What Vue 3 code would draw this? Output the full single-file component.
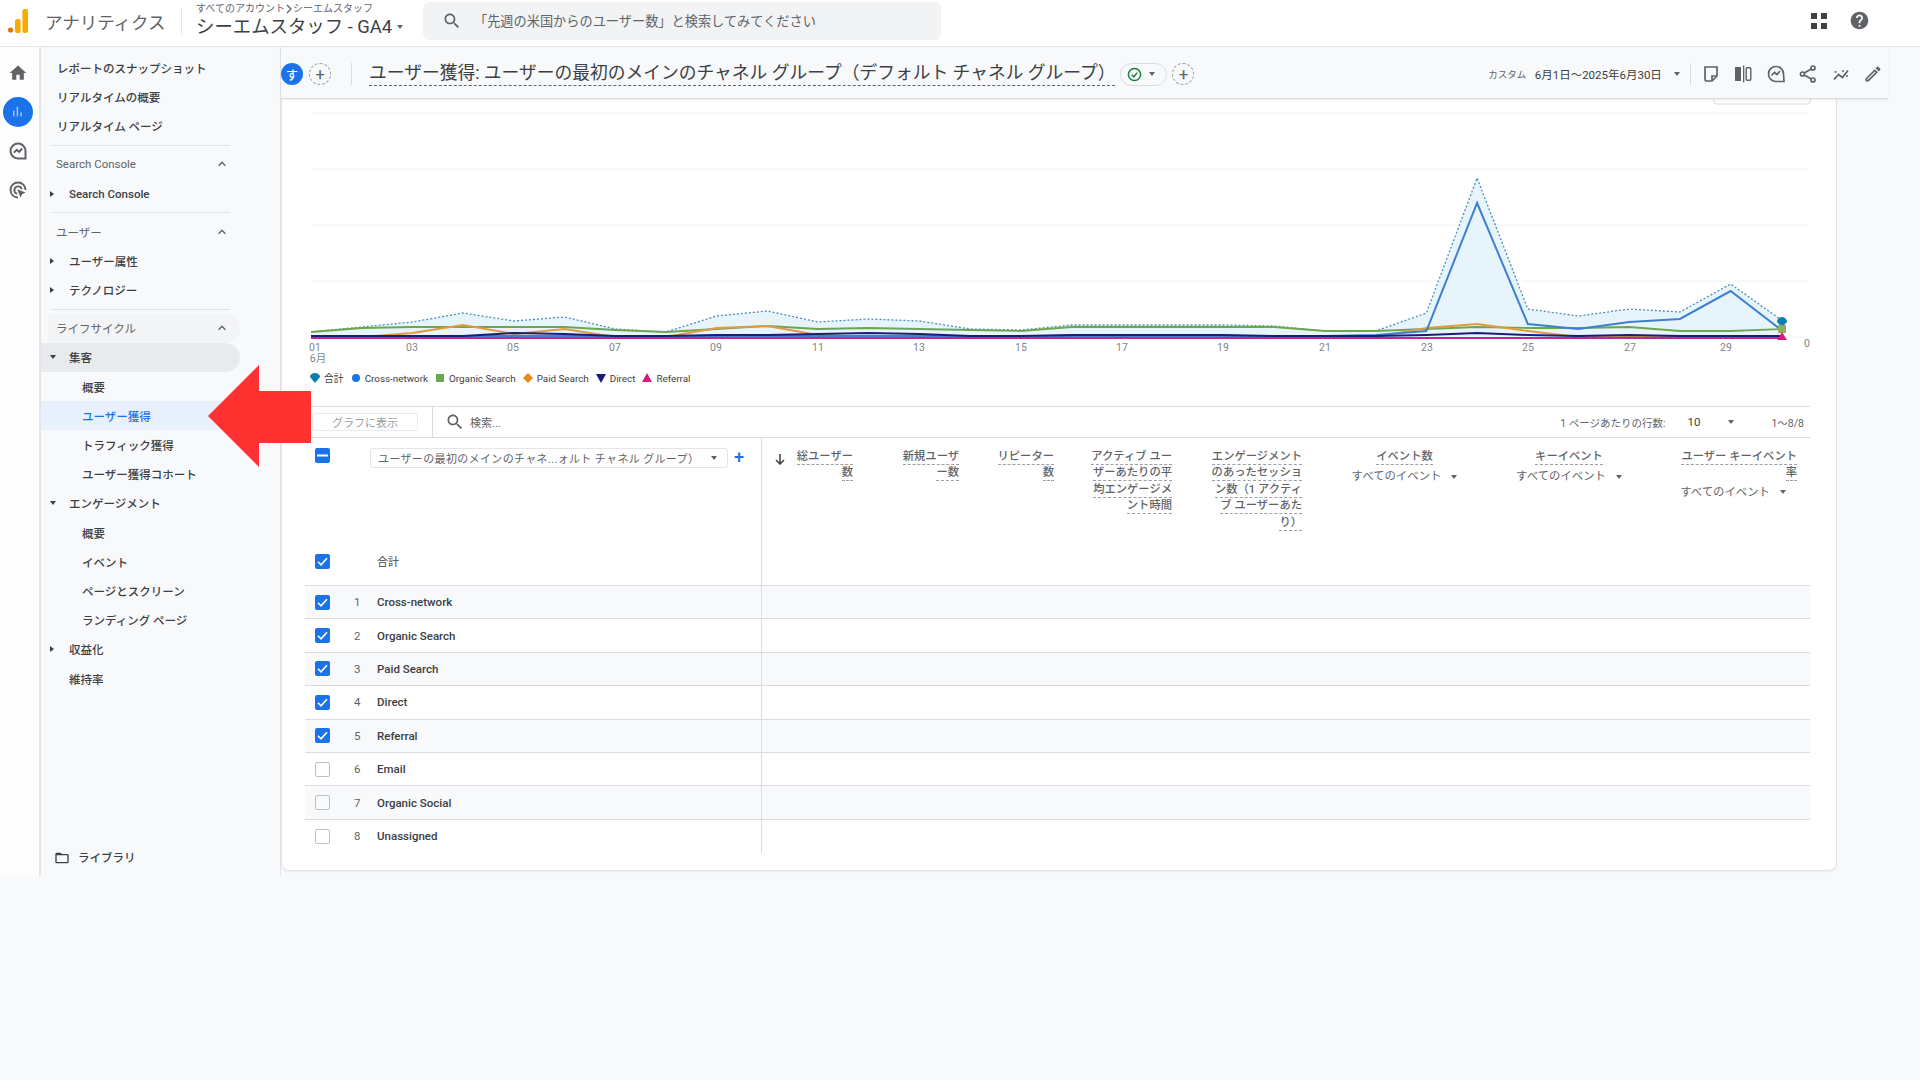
<script setup>
// GA4 ユーザー獲得レポート画面
const navItems = [
  { label: 'ライフサイクル', type: 'head', pill: true },
  { label: '集客', type: 'group', open: true, active: true },
  { label: '概要', type: 'sub' },
  { label: 'ユーザー獲得', type: 'sub', current: true },
  { label: 'トラフィック獲得', type: 'sub' },
  { label: 'ユーザー獲得コホート', type: 'sub' },
  { label: 'エンゲージメント', type: 'group', open: true },
  { label: '概要', type: 'sub' },
  { label: 'イベント', type: 'sub' },
  { label: 'ページとスクリーン', type: 'sub' },
  { label: 'ランディング ページ', type: 'sub' },
  { label: '収益化', type: 'group' },
  { label: '維持率', type: 'plain' },
]

const columns = [
  { lines: ['総ユーザー', '数'], arrow: true },
  { lines: ['新規ユーザ', 'ー数'] },
  { lines: ['リピーター', '数'] },
  { lines: ['アクティブ ユー', 'ザーあたりの平', '均エンゲージメ', 'ント時間'] },
  { lines: ['エンゲージメント', 'のあったセッショ', 'ン数（1 アクティ', 'ブ ユーザーあた', 'り）'] },
  { lines: ['イベント数'], event: true, center: true },
  { lines: ['キーイベント'], event: true, center: true },
  { lines: ['ユーザー キーイベント', '率'], event: true, inset: true },
]

const rows = [
  { name: 'Cross-network', on: true },
  { name: 'Organic Search', on: true },
  { name: 'Paid Search', on: true },
  { name: 'Direct', on: true },
  { name: 'Referral', on: true },
  { name: 'Email', on: false },
  { name: 'Organic Social', on: false },
  { name: 'Unassigned', on: false },
]

const legend = [
  { label: '合計', shape: 'drop', color: '#0b7fab' },
  { label: 'Cross-network', shape: 'circle', color: '#1a73e8' },
  { label: 'Organic Search', shape: 'square', color: '#6aa84f' },
  { label: 'Paid Search', shape: 'diamond', color: '#e8871e' },
  { label: 'Direct', shape: 'down', color: '#1a1a80' },
  { label: 'Referral', shape: 'up', color: '#d81b82' },
]

const xOf = (i) => 311 + i * 50.7
const toPoints = (ys) => ys.map((y, i) => `${xOf(i).toFixed(1)},${y}`).join(' ')

const total = [332, 327, 322, 313, 321, 317, 329, 332, 316, 311, 322, 319, 321, 329, 330, 325, 325, 325, 325, 326, 331, 331, 313, 178, 309, 316, 309, 312, 284, 320]
const cross = [336, 336, 336, 336, 336, 336, 336, 336, 336, 336, 336, 336, 336, 336, 336, 336, 336, 336, 336, 336, 336, 335, 331, 203, 324, 329, 322, 319, 291, 330]
const organic = [332, 328, 327, 327, 327, 327, 330, 332, 329, 326, 329, 328, 329, 330, 331, 327, 327, 327, 327, 327, 331, 331, 329, 327, 328, 328, 327, 331, 331, 329]
const paid = [337, 337, 333, 325, 334, 329, 337, 337, 328, 326, 335, 337, 336, 337, 337, 337, 337, 337, 337, 337, 337, 337, 328, 324, 331, 337, 337, 337, 337, 337]
const direct = [336, 336, 336, 336, 333, 334, 336, 336, 335, 335, 334, 333, 334, 336, 336, 335, 335, 335, 335, 336, 336, 336, 335, 333, 335, 336, 335, 336, 336, 336]
const referral = total.map(() => 338)

const areaPoints = `${toPoints(total)} ${xOf(29)},337 ${xOf(0)},337`
const gridYs = [113, 169, 225, 281]
const axisLabels = [
  ['01', 315], ['03', 412], ['05', 513], ['07', 615], ['09', 716], ['11', 818], ['13', 919], ['15', 1021],
  ['17', 1122], ['19', 1223], ['21', 1325], ['23', 1427], ['25', 1528], ['27', 1630], ['29', 1726],
]
</script>

<template>
  <div class="page">
    <!-- 上部バー -->
    <header class="topbar">
      <svg class="logo" viewBox="0 0 20 24" width="20" height="24">
        <circle cx="2.6" cy="21" r="2.6" fill="#e37400" />
        <rect x="7" y="10" width="5.6" height="14" rx="2" fill="#f9ab00" />
        <rect x="14.4" y="0" width="5.6" height="24" rx="2" fill="#f9ab00" />
      </svg>
      <span class="product">アナリティクス</span>
      <span class="topbar-sep"></span>
      <div class="account">
        <div class="crumb">すべてのアカウント<svg viewBox="0 0 8 10" width="8" height="10"><path d="M2 1l4 4-4 4" fill="none" stroke="#5f6368" stroke-width="1.3" /></svg>シーエムスタッフ</div>
        <div class="property">シーエムスタッフ - GA4<i class="caret"></i></div>
      </div>
      <div class="searchbox">
        <svg viewBox="0 0 24 24" width="20" height="20" fill="#5f6368"><path d="M15.5 14h-.79l-.28-.27C15.41 12.59 16 11.11 16 9.5 16 5.91 13.09 3 9.5 3S3 5.91 3 9.5 5.91 16 9.5 16c1.61 0 3.09-.59 4.23-1.57l.27.28v.79l5 4.99L20.49 19l-4.99-5zm-6 0C7.01 14 5 11.99 5 9.5S7.01 5 9.5 5 14 7.01 14 9.5 11.99 14 9.500 14z" /></svg>
        <span>「先週の米国からのユーザー数」と検索してみてください</span>
      </div>
      <div class="top-actions">
        <svg viewBox="0 0 16 16" width="16" height="16" fill="#3c4043">
          <rect width="6" height="6" /><rect x="10" width="6" height="6" /><rect y="10" width="6" height="6" /><rect x="10" y="10" width="6" height="6" />
        </svg>
        <svg viewBox="0 0 24 24" width="21" height="21" fill="#5f6368"><path d="M12 2C6.48 2 2 6.48 2 12s4.48 10 10 10 10-4.48 10-10S17.52 2 12 2zm1 17h-2v-2h2v2zm2.07-7.75l-.9.92C13.45 12.9 13 13.5 13 15h-2v-.5c0-1.1.45-2.1 1.17-2.83l1.24-1.26c.37-.36.59-.86.59-1.41 0-1.1-.9-2-2-2s-2 .9-2 2H8c0-2.21 1.79-4 4-4s4 1.79 4 4c0 .88-.36 1.68-.93 2.25z" /></svg>
      </div>
    </header>

    <div class="body">
      <!-- 左端アイコン列 -->
      <aside class="rail">
        <div class="rail-btn">
          <svg viewBox="0 0 24 24" width="20" height="20" fill="#5f6368"><path d="M10 20v-6h4v6h5v-8h3L12 3 2 12h3v8z" /></svg>
        </div>
        <div class="rail-btn">
          <span class="rail-active">
            <svg viewBox="0 0 16 16" width="13" height="13" fill="#a8c7fa"><rect x="2.500" y="7" width="1.800" height="7" /><rect x="7" y="2" width="1.800" height="12" /><rect x="11.500" y="9" width="1.800" height="5" /></svg>
          </span>
        </div>
        <div class="rail-btn">
          <svg viewBox="0 0 24 24" width="20" height="20" fill="none" stroke="#5f6368" stroke-width="2.400"><path d="M21 21h-9a9 9 0 1 1 9-9z" /><path d="M7 14l3.500-3.500 3 2.500L17 9" /></svg>
        </div>
        <div class="rail-btn">
          <svg viewBox="0 0 24 24" width="20" height="20" fill="none" stroke="#5f6368" stroke-width="2.200"><path d="M21 12a9 9 0 1 0-9 9" /><path d="M16.500 11A4.500 4.500 0 1 0 11 16.500" /><path d="M11 11l10 4-4 2-2 4z" fill="#5f6368" stroke="none" /></svg>
        </div>
      </aside>

      <!-- ナビゲーション -->
      <nav class="nav">
        <div class="nav-row nav-top">レポートのスナップショット</div>
        <div class="nav-row nav-top">リアルタイムの概要</div>
        <div class="nav-row nav-top">リアルタイム ページ</div>
        <div class="nav-divider"></div>
        <div class="nav-row nav-head">
          <span>Search Console</span>
          <svg class="chev" viewBox="0 0 12 12" width="10" height="10"><path d="M2 8l4-4 4 4" fill="none" stroke="#5f6368" stroke-width="1.7" /></svg>
        </div>
        <div class="nav-row nav-group"><i class="caret-r"></i>Search Console</div>
        <div class="nav-divider"></div>
        <div class="nav-row nav-head">
          <span>ユーザー</span>
          <svg class="chev" viewBox="0 0 12 12" width="10" height="10"><path d="M2 8l4-4 4 4" fill="none" stroke="#5f6368" stroke-width="1.7" /></svg>
        </div>
        <div class="nav-row nav-group"><i class="caret-r"></i>ユーザー属性</div>
        <div class="nav-row nav-group"><i class="caret-r"></i>テクノロジー</div>
        <div class="nav-divider"></div>
        <template v-for="item in navItems" :key="item.label + item.type">
          <div v-if="item.type === 'head'" class="nav-row nav-head nav-pill">
            <span>{{ item.label }}</span>
            <svg class="chev" viewBox="0 0 12 12" width="10" height="10"><path d="M2 8l4-4 4 4" fill="none" stroke="#5f6368" stroke-width="1.7" /></svg>
          </div>
          <div v-else-if="item.type === 'group'" class="nav-row nav-group" :class="{ 'is-open': item.active }">
            <i :class="item.open ? 'caret-d' : 'caret-r'"></i>{{ item.label }}
          </div>
          <div v-else-if="item.type === 'plain'" class="nav-row nav-group">{{ item.label }}</div>
          <div v-else class="nav-row nav-sub" :class="{ 'is-current': item.current }">{{ item.label }}</div>
        </template>
        <div class="library">
          <svg viewBox="0 0 24 24" width="16" height="16" fill="#3c4043"><path d="M20 6h-8l-2-2H4c-1.100 0-1.990.9-1.990 2L2 18c0 1.100.9 2 2 2h16c1.100 0 2-.9 2-2V8c0-1.100-.9-2-2-2zm0 12H4V8h16v10z" /></svg>
          <span>ライブラリ</span>
        </div>
      </nav>

      <main class="main">
        <!-- レポートツールバー -->
        <div class="toolbar">
          <span class="avatar">す</span>
          <span class="add-circle">+</span>
          <span class="tool-sep"></span>
          <h1 class="title">ユーザー獲得: ユーザーの最初のメインのチャネル グループ（デフォルト チャネル グループ）</h1>
          <span class="status">
            <svg viewBox="0 0 16 16" width="15" height="15" fill="none" stroke="#188038" stroke-width="1.6"><circle cx="8" cy="8" r="6.500" /><path d="M5 8.300l2.200 2.200L11 6" /></svg>
            <i class="caret"></i>
          </span>
          <span class="add-circle add-second">+</span>
          <div class="tool-right">
            <span class="range-tag">カスタム</span>
            <span class="range">6月1日～2025年6月30日</span>
            <i class="caret"></i>
            <span class="tool-sep tool-sep-right"></span>
            <svg viewBox="0 0 20 20" width="20" height="20" fill="none" stroke="#5f6368" stroke-width="1.700"><path d="M4 3h12v9l-5 5H6a2 2 0 0 1-2-2z" /><path d="M16 12h-5v5" /></svg>
            <svg viewBox="0 0 20 20" width="20" height="20" fill="#5f6368"><rect x="2" y="3" width="6" height="14" /><rect x="10" y="1.500" width="1.300" height="17" /><rect x="13.200" y="3.700" width="4.600" height="12.600" rx="1" fill="none" stroke="#5f6368" stroke-width="1.400" /></svg>
            <svg viewBox="0 0 20 20" width="20" height="20" fill="none" stroke="#5f6368" stroke-width="1.700"><path d="M18 17.500H10a7.500 7.500 0 1 1 7.500-7.500z" /><path d="M5.500 11.500l3-3 2.500 2 3-3.500" /></svg>
            <svg viewBox="0 0 20 20" width="20" height="20" fill="none" stroke="#5f6368" stroke-width="1.700"><circle cx="15" cy="4" r="2" /><circle cx="4.500" cy="10" r="2" /><circle cx="15" cy="16" r="2" /><path d="M13.300 5L6.200 9M6.200 11l7.100 4" /></svg>
            <svg viewBox="0 0 20 20" width="20" height="20" fill="none" stroke="#5f6368" stroke-width="1.800"><path d="M3 15.500l4.500-5 4 3 5.500-7" /><circle cx="4.500" cy="8" r="1" fill="#5f6368" stroke="none" /><circle cx="12" cy="7" r="1" fill="#5f6368" stroke="none" /><circle cx="16" cy="12" r="1" fill="#5f6368" stroke="none" /></svg>
            <svg viewBox="0 0 24 24" width="20" height="20" fill="#5f6368"><path d="M14.060 9.020l.92.92L5.920 19H5v-.92l9.060-9.060M17.660 3c-.25 0-.51.1-.7.29l-1.830 1.830 3.750 3.750 1.830-1.830c.39-.39.39-1.020 0-1.410l-2.340-2.340c-.2-.2-.45-.29-.71-.29zm-3.600 3.190L3 17.250V21h3.750L17.810 9.940l-3.750-3.750z" /></svg>
          </div>
        </div>

        <section class="card">
          <!-- グラフ -->
          <svg class="chart" viewBox="281 99 1556 269" width="1556" height="269">
            <path d="M1714 99v3a2 2 0 0 0 2 2h92a2 2 0 0 0 2-2v-3" fill="none" stroke="#dadce0" />
            <line v-for="y in gridYs" :key="y" x1="310" x2="1808" :y1="y" :y2="y" stroke="#f1f2f4" />
            <line x1="1782" x2="1808" y1="337" y2="337" stroke="#f1f2f4" />
            <polygon :points="areaPoints" fill="#e8f4fc" />
            <polyline :points="toPoints(total)" fill="none" stroke="#4b8fb5" stroke-width="1.300" stroke-dasharray="2 2" />
            <polyline :points="toPoints(organic)" fill="none" stroke="#6aa84f" stroke-width="1.800" />
            <polyline :points="toPoints(paid)" fill="none" stroke="#e39a3e" stroke-width="2" />
            <polyline :points="toPoints(cross)" fill="none" stroke="#3f7fcf" stroke-width="2" />
            <polyline :points="toPoints(direct)" fill="none" stroke="#1c1c78" stroke-width="2" />
            <polyline :points="toPoints(referral)" fill="none" stroke="#c0289a" stroke-width="2" />
            <path d="M1777 322a5 5 0 0 1 10 0l-5 5z" fill="#0b7fab" />
            <rect x="1778" y="325" width="8" height="8" fill="#8fae60" />
            <path d="M1777 340l5-8 5 8z" fill="#d81b82" />
            <text v-for="label in axisLabels" :key="label[0]" class="axis" :x="label[1]" y="350.500" text-anchor="middle">{{ label[0] }}</text>
            <text class="axis" x="318" y="361.500" text-anchor="middle">6月</text>
            <text class="axis" x="1807" y="347" text-anchor="middle">0</text>
          </svg>

          <div class="legend">
            <span v-for="item in legend" :key="item.label" class="legend-item">
              <svg viewBox="0 0 10 10" width="10" height="10" :fill="item.color">
                <path v-if="item.shape === 'drop'" d="M0 4a5 4 0 0 1 10 0L5 10z" />
                <circle v-else-if="item.shape === 'circle'" cx="5" cy="5" r="4" />
                <rect v-else-if="item.shape === 'square'" x="1" y="1" width="8" height="8" />
                <path v-else-if="item.shape === 'diamond'" d="M5 0l5 5-5 5-5-5z" />
                <path v-else-if="item.shape === 'down'" d="M0 1h10L5 10z" />
                <path v-else d="M5 0l5 9H0z" />
              </svg>
              {{ item.label }}
            </span>
          </div>

          <!-- テーブル -->
          <div class="table">
            <div class="table-tools">
              <span class="plot-btn">グラフに表示</span>
              <span class="tools-sep"></span>
              <svg viewBox="0 0 24 24" width="20" height="20" fill="#5f6368"><path d="M15.500 14h-.79l-.28-.27C15.410 12.590 16 11.110 16 9.500 16 5.910 13.090 3 9.500 3S3 5.910 3 9.500 5.910 16 9.500 16c1.610 0 3.090-.59 4.230-1.570l.27.28v.79l5 4.990L20.490 19l-4.990-5zm-6 0C7.010 14 5 11.990 5 9.500S7.010 5 9.500 5 14 7.010 14 9.500 11.990 14 9.500 14z" /></svg>
              <span class="tools-search">検索...</span>
              <div class="pager">
                <span>1 ページあたりの行数:</span>
                <span class="pager-size">10</span>
                <i class="caret"></i>
                <span class="pager-range">1～8/8</span>
              </div>
            </div>

            <div class="head">
              <div class="head-dim">
                <div class="head-dim-top">
                  <span class="check is-on">
                    <svg viewBox="0 0 15 15" width="15" height="15"><rect x="2" y="6.500" width="11" height="2" fill="#fff" /></svg>
                  </span>
                  <span class="dim-select">
                    <span>ユーザーの最初のメインのチャネ...ォルト チャネル グループ）</span>
                    <i class="caret"></i>
                  </span>
                  <span class="dim-add">+</span>
                </div>
                <div class="head-total">
                  <span class="check is-on">
                    <svg viewBox="0 0 15 15" width="15" height="15"><path d="M3 7.800l3 3 6-6.500" fill="none" stroke="#fff" stroke-width="1.600" /></svg>
                  </span>
                  <span class="total-label">合計</span>
                </div>
              </div>
              <div class="head-metrics">
                <div v-for="(col, i) in columns" :key="i" class="metric" :class="{ 'metric-center': col.center }">
                  <svg v-if="col.arrow" class="sort" viewBox="0 0 12 12" width="12" height="12" fill="none" stroke="#3c4043" stroke-width="1.500"><path d="M6 1v10M2 7l4 4 4-4" /></svg>
                  <div v-for="line in col.lines" :key="line" class="metric-line"><span>{{ line }}</span></div>
                  <div v-if="col.event" class="metric-event" :class="{ 'metric-inset': col.inset }">すべてのイベント<i class="caret"></i></div>
                </div>
              </div>
            </div>

            <div v-for="(row, i) in rows" :key="row.name" class="row">
              <div class="row-dim">
                <span class="check" :class="{ 'is-on': row.on }">
                  <svg v-if="row.on" viewBox="0 0 15 15" width="15" height="15"><path d="M3 7.800l3 3 6-6.500" fill="none" stroke="#fff" stroke-width="1.600" /></svg>
                </span>
                <span class="row-num">{{ i + 1 }}</span>
                <span class="row-name">{{ row.name }}</span>
              </div>
            </div>
          </div>
        </section>
      </main>
    </div>

    <!-- 注釈の赤い矢印 -->
    <svg class="callout" viewBox="0 0 103 102" width="103" height="102">
      <polygon points="0,51 51,0 51,26 103,26 103,78 51,78 51,102" fill="#ff3131" />
    </svg>
  </div>
</template>

<style scoped>
.page {
  position: relative;
  width: 1920px;
  height: 1080px;
  overflow: hidden;
  background: #f8f9fb;
  color: #3c4043;
  font-family: Roboto, "Noto Sans CJK JP", sans-serif;
}

.caret {
  display: inline-block;
  width: 0;
  height: 0;
  border-left: 3.5px solid transparent;
  border-right: 3.5px solid transparent;
  border-top: 4px solid #5f6368;
}

/* 上部バー */
.topbar {
  display: flex;
  align-items: center;
  height: 47px;
  box-sizing: border-box;
  padding: 0 0 4px 8px;
  background: #fff;
  border-bottom: 1px solid #e3e5e8;
}
.logo {
  flex: none;
}
.product {
  margin-left: 17px;
  width: 122px;
  font-size: 17.5px;
  color: #5f6368;
  white-space: nowrap;
}
.topbar-sep {
  width: 1px;
  height: 26px;
  margin-left: 14px;
  background: #e3e5e8;
}
.account {
  width: 227px;
  margin-left: 14px;
}
.crumb {
  display: flex;
  align-items: center;
  font-size: 10px;
  line-height: 12px;
  color: #5f6368;
  white-space: nowrap;
}
.property {
  display: flex;
  align-items: center;
  gap: 5px;
  font-size: 18.4px;
  line-height: 24px;
  color: #3c4043;
  white-space: nowrap;
}
.searchbox {
  display: flex;
  align-items: center;
  width: 518px;
  height: 38px;
  margin-bottom: 1px;
  padding-left: 19px;
  box-sizing: border-box;
  gap: 12px;
  border-radius: 6px;
  background: #f1f3f4;
  font-size: 13.2px;
  color: #5f6368;
}
.top-actions {
  display: flex;
  align-items: center;
  gap: 22px;
  margin-left: auto;
  margin-bottom: 1px;
  padding-right: 50px;
}

/* 本体 */
.body {
  display: flex;
  height: 829px;
}
.rail {
  width: 39px;
  padding-top: 6px;
  background: #fdfdfe;
  border-right: 2px solid #e3e5e8;
}
.rail-btn {
  display: flex;
  align-items: center;
  justify-content: center;
  height: 39px;
  padding-right: 4px;
}
.rail-active {
  display: flex;
  align-items: center;
  justify-content: center;
  width: 30px;
  height: 30px;
  border-radius: 50%;
  background: #1a73e8;
}

/* ナビゲーション */
.nav {
  display: flex;
  flex-direction: column;
  flex: none;
  width: 240px;
  padding-top: 6.2px;
  box-sizing: border-box;
  border-right: 1px solid #e3e5e8;
  font-size: 11.5px;
  font-weight: 500;
  color: #3c4043;
}
.nav-row {
  display: flex;
  align-items: center;
  flex: none;
  height: 29.2px;
  width: 199px;
  box-sizing: border-box;
  white-space: nowrap;
}
.nav-top {
  padding-left: 16px;
}
.nav-divider {
  flex: none;
  height: 4px;
  width: 179px;
  margin: 0 0 4px 10px;
  border-bottom: 1px solid #e0e2e6;
}
.nav-head {
  justify-content: space-between;
  padding: 0 13px 0 15px;
  font-weight: 400;
  color: #5f6368;
}
.nav-pill {
  width: 192px;
  margin-left: 7px;
  padding-left: 8px;
  border-radius: 0 15px 15px 0;
  background: #f3f4f6;
}
.chev {
  flex: none;
}
.nav-group {
  padding-left: 28px;
  position: relative;
}
.nav-group.is-open {
  border-radius: 0 15px 15px 0;
  background: #e8eaed;
}
.caret-r,
.caret-d {
  position: absolute;
  left: 9px;
  width: 0;
  height: 0;
}
.caret-r {
  border-top: 3.5px solid transparent;
  border-bottom: 3.5px solid transparent;
  border-left: 4px solid #3c4043;
}
.caret-d {
  border-left: 3.5px solid transparent;
  border-right: 3.5px solid transparent;
  border-top: 4px solid #3c4043;
}
.nav-sub {
  padding-left: 41px;
}
.nav-sub.is-current {
  border-radius: 0 15px 15px 0;
  background: #e8f0fe;
  color: #1a73e8;
}
.library {
  display: flex;
  align-items: center;
  gap: 8px;
  margin-top: auto;
  padding: 0 0 9px 13px;
  line-height: 18px;
}

/* メイン */
.main {
  flex: 1;
  min-width: 0;
}
.toolbar {
  position: relative;
  z-index: 1;
  display: flex;
  align-items: center;
  width: 1607px;
  height: 52px;
  padding-top: 3px;
  box-sizing: border-box;
  background: #f8f9fb;
  border-bottom: 1px solid #dadce0;
  box-shadow: 0 1px 2px rgba(60, 64, 67, 0.1);
}
.avatar {
  display: flex;
  align-items: center;
  justify-content: center;
  flex: none;
  width: 22px;
  height: 22px;
  border-radius: 50%;
  background: #1a73e8;
  color: #fff;
  font-size: 12px;
  font-weight: 500;
}
.add-circle {
  display: flex;
  align-items: center;
  justify-content: center;
  flex: none;
  width: 22px;
  height: 22px;
  margin-left: 6px;
  box-sizing: border-box;
  border: 1px dashed #9aa0a6;
  border-radius: 50%;
  font-size: 17px;
  line-height: 1;
  color: #5f6368;
}
.add-second {
  margin-left: 5px;
}
.tool-sep {
  flex: none;
  width: 1px;
  height: 22px;
  margin: 0 17px 0 20px;
  background: #dadce0;
}
.title {
  margin: 0;
  padding-bottom: 1px;
  border-bottom: 1.5px dashed #5f6368;
  font-size: 17.76px;
  font-weight: 400;
  line-height: 22px;
  color: #3c4043;
  white-space: nowrap;
}
.status {
  display: flex;
  align-items: center;
  gap: 7px;
  flex: none;
  width: 47px;
  height: 23px;
  margin-left: 5px;
  padding-left: 6px;
  box-sizing: border-box;
  border: 1px solid #dadce0;
  border-radius: 12px;
}
.tool-right {
  display: flex;
  align-items: center;
  gap: 12.4px;
  margin-left: auto;
  padding-right: 5px;
}
.range-tag {
  font-size: 9.5px;
  color: #5f6368;
  margin-right: -4px;
}
.range {
  font-size: 11.5px;
  color: #3c4043;
}
.tool-sep-right {
  margin: 0 -2px 0 -3px;
}

.card {
  width: 1556px;
  height: 772px;
  box-sizing: border-box;
  background: #fff;
  border: 1px solid #e3e5e8;
  border-top: 0;
  border-radius: 0 0 8px 8px;
  box-shadow: 0 1px 2px rgba(60, 64, 67, 0.06);
}
.chart {
  display: block;
  margin-left: -1px;
}
.axis {
  font-size: 10.5px;
  fill: #80868b;
}
.legend {
  display: flex;
  align-items: center;
  gap: 7px;
  height: 20px;
  margin-left: 28px;
  font-size: 9.85px;
  color: #3c4043;
}
.legend-item {
  display: inline-flex;
  align-items: center;
  gap: 4px;
}

/* テーブル */
.table {
  margin: 18px 26px 0 23px;
}
.table-tools {
  display: flex;
  align-items: center;
  height: 32px;
  margin-left: 5px;
  box-sizing: border-box;
  border-top: 1px solid #dadce0;
  border-bottom: 1px solid #dadce0;
}
.plot-btn {
  display: flex;
  align-items: center;
  justify-content: center;
  width: 106px;
  height: 18px;
  margin-left: 2px;
  border: 1px solid #e8eaed;
  border-radius: 3px;
  box-sizing: border-box;
  font-size: 11px;
  color: #9aa0a6;
}
.tools-sep {
  align-self: stretch;
  width: 1px;
  margin: 0 12px 0 14px;
  background: #dadce0;
}
.tools-search {
  margin-left: 5px;
  font-size: 11px;
  color: #5f6368;
}
.pager {
  display: flex;
  align-items: center;
  margin-left: auto;
  padding-right: 6px;
  font-size: 10.5px;
  color: #5f6368;
}
.pager-size {
  margin: 0 28px 0 22px;
  font-size: 11.5px;
  color: #3c4043;
}
.pager-range {
  margin-left: 37px;
}

.head {
  display: flex;
  height: 148px;
  box-sizing: border-box;
  border-bottom: 1px solid #dadce0;
}
.head-dim {
  display: flex;
  flex-direction: column;
  justify-content: space-between;
  width: 457px;
  flex: none;
  box-sizing: border-box;
  border-right: 1px solid #dadce0;
}
.head-dim-top {
  display: flex;
  align-items: flex-start;
  padding: 10px 0 0 10px;
}
.check {
  display: block;
  flex: none;
  width: 15px;
  height: 15px;
  box-sizing: border-box;
  border: 1px solid #bdc1c6;
  border-radius: 2px;
}
.check svg {
  display: block;
}
.check.is-on {
  border: 0;
  background: #1a73e8;
}
.dim-select {
  display: flex;
  align-items: center;
  justify-content: space-between;
  width: 358px;
  height: 20px;
  margin-left: 40px;
  padding: 0 10px 0 7px;
  box-sizing: border-box;
  border: 1px solid #e3e5e8;
  border-radius: 3px;
  font-size: 11px;
  letter-spacing: 0.35px;
  color: #5f6368;
  white-space: nowrap;
}
.dim-add {
  margin-left: 6px;
  font-size: 18px;
  line-height: 18px;
  font-weight: 500;
  color: #1a73e8;
}
.head-total {
  display: flex;
  align-items: center;
  padding: 0 0 16px 10px;
}
.total-label {
  margin-left: 47px;
  font-size: 11px;
  font-weight: 500;
  color: #5f6368;
}
.head-metrics {
  display: grid;
  grid-template-columns: 101px 106px 95px 118px 130px 185px 144px 166px;
  flex: 1;
  padding-top: 11px;
  align-items: start;
}
.metric {
  position: relative;
  padding-right: 10px;
  text-align: right;
  font-size: 11.3px;
  font-weight: 500;
  line-height: 16.4px;
  color: #5f6368;
  white-space: nowrap;
}
.metric-center {
  padding-right: 0;
  text-align: center;
}
.metric-line span {
  border-bottom: 1px dashed #9aa0a6;
  padding-bottom: 1px;
}
.sort {
  position: absolute;
  left: 12px;
  top: 4px;
}
.metric-event {
  display: flex;
  align-items: center;
  justify-content: flex-end;
  gap: 10px;
  margin-top: 3px;
  font-size: 11.4px;
  font-weight: 400;
}
.metric-center .metric-event {
  justify-content: center;
}
.metric-inset {
  padding-right: 11px;
  margin-top: 2px;
}

.row {
  height: 33.4px;
  box-sizing: border-box;
  border-bottom: 1px solid #dadce0;
}
.row:nth-child(odd) {
  background: #f8f9fa;
}
.row:last-child {
  border-bottom: 0;
}
.row-dim {
  display: flex;
  align-items: center;
  width: 457px;
  height: 100%;
  padding-left: 10px;
  box-sizing: border-box;
  border-right: 1px solid #dadce0;
  font-size: 11.5px;
  font-weight: 500;
}
.row-num {
  width: 47px;
  padding-left: 24px;
  box-sizing: border-box;
  color: #5f6368;
  font-weight: 400;
}

.callout {
  position: absolute;
  left: 208px;
  top: 365px;
  z-index: 2;
}
</style>

<style>
html,
body {
  background: #f8f9fb;
}
</style>
